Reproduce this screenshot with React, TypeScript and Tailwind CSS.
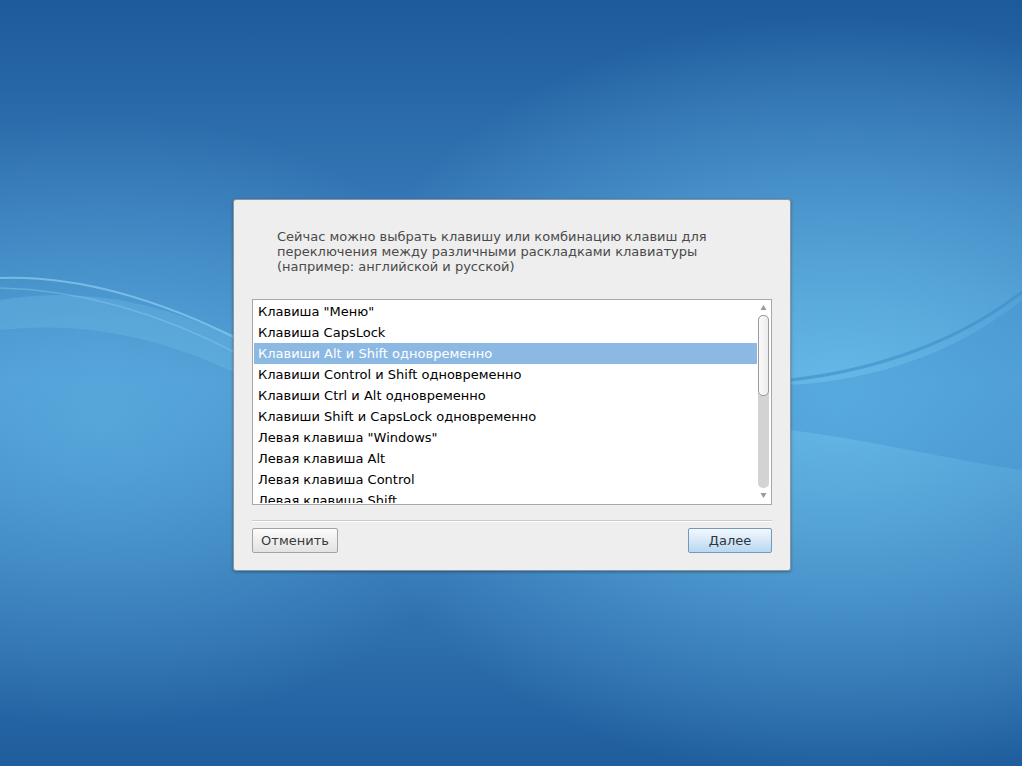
import React from "react"

const items = [
  'Клавиша "Меню"',
  "Клавиша CapsLock",
  "Клавиши Alt и Shift одновременно",
  "Клавиши Control и Shift одновременно",
  "Клавиши Ctrl и Alt одновременно",
  "Клавиши Shift и CapsLock одновременно",
  'Левая клавиша "Windows"',
  "Левая клавиша Alt",
  "Левая клавиша Control",
  "Левая клавиша Shift",
  "Правая клавиша Alt",
]

function Wallpaper() {
  return (
    <svg className="absolute inset-0" width="1022" height="766" viewBox="0 0 1022 766">
      <defs>
        <radialGradient id="glow" cx="0.82" cy="0.52" r="0.5">
          <stop offset="0" stopColor="#6cc3ee" stopOpacity="0.8" />
          <stop offset="1" stopColor="#6cc3ee" stopOpacity="0" />
        </radialGradient>
        <radialGradient id="glowL" cx="0.1" cy="0.55" r="0.4">
          <stop offset="0" stopColor="#62b8e6" stopOpacity="0.6" />
          <stop offset="1" stopColor="#62b8e6" stopOpacity="0" />
        </radialGradient>
      </defs>
      <rect width="1022" height="766" fill="url(#glow)" />
      <rect width="1022" height="766" fill="url(#glowL)" />
      <path d="M0 300 C 90 285 170 305 250 345 L 250 380 C 170 340 90 320 0 330 Z" fill="#7cc8f0" opacity="0.25" />
      <path d="M0 278 C 80 275 160 300 240 340" stroke="#9ad6f5" strokeWidth="2" fill="none" opacity="0.6" />
      <path d="M0 288 C 90 290 170 318 240 355" stroke="#9ad6f5" strokeWidth="1.5" fill="none" opacity="0.35" />
      <path d="M790 380 C 880 370 960 340 1022 292" stroke="#3f8cc8" strokeWidth="3" fill="none" opacity="0.6" />
      <path d="M790 385 C 880 380 960 350 1022 300 L 1022 470 C 950 460 870 440 790 430 Z" fill="#3c8ccc" opacity="0.35" />
    </svg>
  )
}

function Scrollbar() {
  return (
    <div className="flex flex-col items-center w-[13px] h-full py-[1px]">
      <svg width="9" height="9" viewBox="0 0 9 9" className="mt-[1px]">
        <path d="M4.5 2 L7.5 7 L1.5 7 Z" fill="#9a9a9a" />
      </svg>
      <div className="flex-1 w-[11px] mt-[3px] mb-[3px] flex flex-col rounded-[5px] bg-[#d3d3d3]">
        <div className="h-[81px] rounded-[5px] border border-[#9c9c9c] bg-gradient-to-r from-[#fafafa] to-[#ececec]" />
      </div>
      <svg width="9" height="9" viewBox="0 0 9 9" className="mb-[2px]">
        <path d="M1.5 2 L7.5 2 L4.5 7 Z" fill="#9a9a9a" />
      </svg>
    </div>
  )
}

export default function App() {
  return (
    <div
      className="relative w-[1022px] h-[766px] overflow-hidden bg-gradient-to-b from-[#1d5a9b] via-[#4a92ce] to-[#1f5d9d]"
      style={{ fontFamily: '"DejaVu Sans", "Noto Sans", sans-serif' }}
    >
      <Wallpaper />
      <div className="relative flex justify-center pt-[199px] pl-[2px]">
        <div className="w-[558px] h-[372px] rounded-[3px] border border-[#8c949c] bg-[#eeeeee] shadow-[0_1px_3px_rgba(0,0,0,0.35)] flex flex-col px-[18px] pb-[18px]">
          <p className="mt-[29px] ml-[25px] text-[13px] leading-[15px] text-[#4a4a4a]">
            Сейчас можно выбрать клавишу или комбинацию клавиш для
            <br />
            переключения между различными раскладками клавиатуры
            <br />
            (например: английской и русской)
          </p>
          <div className="mt-[25px] h-[206px] border border-[#a7a7a7] bg-white flex p-[1px]">
            <ul className="flex-1 overflow-hidden">
              {items.map((item, i) => (
                <li
                  key={item}
                  className={
                    i === 2
                      ? "h-[21px] leading-[21px] px-[4px] text-[13px] bg-[#8cb9e4] text-white whitespace-nowrap"
                      : "h-[21px] leading-[21px] px-[4px] text-[13px] text-black whitespace-nowrap"
                  }
                >
                  {item}
                </li>
              ))}
            </ul>
            <Scrollbar />
          </div>
          <div className="mt-[15px] h-[2px] border-t border-[#cacaca] border-b border-b-white" />
          <div className="mt-[6px] flex justify-between">
            <button className="h-[25px] w-[86px] rounded-[2px] border border-[#a3a3a3] bg-gradient-to-b from-[#fbfbfb] to-[#e3e3e3] text-[13px] text-[#3a3a3a]">
              Отменить
            </button>
            <button className="h-[25px] w-[84px] rounded-[2px] border border-[#7797bb] bg-gradient-to-b from-[#f3f8fd] to-[#b9d8f2] text-[13px] text-[#2e3440]">
              Далее
            </button>
          </div>
        </div>
      </div>
    </div>
  )
}
